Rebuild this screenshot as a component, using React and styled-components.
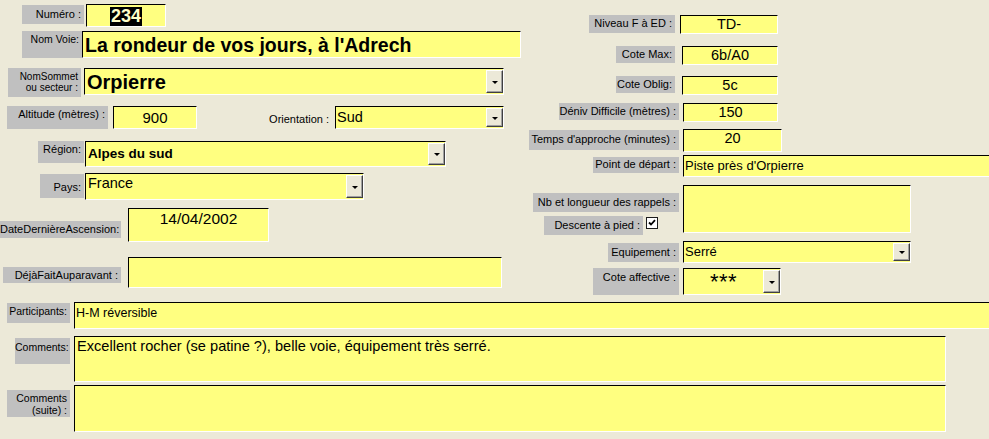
import React from 'react'
import styled, { createGlobalStyle } from 'styled-components'

const GlobalStyle = createGlobalStyle`
  html, body {
    margin: 0;
    padding: 0;
    background: #ece9d8;
    overflow: hidden;
  }
  body {
    font-family: "Liberation Sans", Arial, sans-serif;
    color: #000;
  }
`

const Form = styled.div`
  width: 989px;
  height: 439px;
  overflow: hidden;
  background: #ece9d8;
`

const Top = styled.div`
  display: flex;
  height: 302px;
`

const Column = styled.div`
  display: flex;
  flex-direction: column;
  width: ${p => p.$w}px;
  padding-top: ${p => p.$pt || 0}px;
  flex-shrink: 0;
`

const Row = styled.div`
  display: flex;
  align-items: flex-start;
  height: ${p => p.$h}px;
  padding-left: ${p => p.$x}px;
  flex-shrink: 0;
`

const Label = styled.div`
  box-sizing: border-box;
  width: ${p => p.$w}px;
  height: ${p => p.$h}px;
  margin-top: ${p => p.$dy || 0}px;
  margin-left: ${p => p.$gap || 0}px;
  background: ${p => (p.$plain ? 'transparent' : '#c0c0c0')};
  font-size: ${p => p.$fs || 11}px;
  line-height: ${p => p.$lh || 13}px;
  text-align: right;
  padding: ${p => p.$pt ?? 2}px 3px 0 0;
  white-space: pre;
  flex-shrink: 0;
`

const Field = styled.div`
  box-sizing: border-box;
  display: flex;
  width: ${p => p.$w}px;
  height: ${p => p.$h}px;
  margin-left: ${p => p.$gap || 0}px;
  margin-top: ${p => p.$dy || 0}px;
  background: #ffff80;
  border-top: 1px solid #000;
  border-left: 1px solid #000;
  border-right: 1px solid #fff;
  border-bottom: 1px solid #fff;
  overflow: hidden;
  flex-shrink: 0;
`

const Value = styled.div`
  flex: 1;
  min-width: 0;
  padding: ${p => p.$pt ?? 1}px 2px 0 ${p => p.$pl ?? 2}px;
  font-size: ${p => p.$fs || 14}px;
  line-height: ${p => p.$lh || 17}px;
  font-weight: ${p => (p.$bold ? 700 : 400)};
  letter-spacing: ${p => p.$ls || 0}px;
  text-align: ${p => (p.$center ? 'center' : 'left')};
  white-space: nowrap;
  overflow: hidden;
`

const Selected = styled.span`
  display: inline-block;
  background: #000;
  color: #ffffc8;
  padding: 0 1px;
`

const DropButton = styled.div`
  box-sizing: border-box;
  width: 17px;
  margin: 1px 0 1px 0;
  background: #ece9d8;
  border-top: 1px solid #fff;
  border-left: 1px solid #fff;
  border-right: 1px solid #404040;
  border-bottom: 1px solid #404040;
  box-shadow: inset -1px -1px 0 #a0a0a0;
  display: flex;
  align-items: center;
  justify-content: center;
  flex-shrink: 0;

  &::after {
    content: '';
    width: 0;
    height: 0;
    border-left: 3px solid transparent;
    border-right: 3px solid transparent;
    border-top: 3px solid #000;
    margin-top: 1px;
  }
`

const Stack = styled.div`
  display: flex;
  flex-direction: column;
  align-items: flex-end;
  width: ${p => p.$w}px;
  flex-shrink: 0;
`

const CheckLine = styled.div`
  display: flex;
  align-items: flex-start;
  margin-top: 4px;
  margin-right: 21px;
`

const CheckBox = styled.div`
  box-sizing: border-box;
  width: 12px;
  height: 12px;
  margin: 1px 0 0 3px;
  background: #fff;
  border: 1px solid #1c1c1c;
  display: flex;
  align-items: center;
  justify-content: center;
`

const Combo = ({ w, h, gap, dy, children, ...v }) => (
  <Field $w={w} $h={h} $gap={gap} $dy={dy}>
    <Value {...v}>{children}</Value>
    <DropButton />
  </Field>
)

const Text = ({ w, h, gap, dy, children, ...v }) => (
  <Field $w={w} $h={h} $gap={gap} $dy={dy}>
    <Value {...v}>{children}</Value>
  </Field>
)

export default function App() {
  return (
    <Form>
      <GlobalStyle />
      <Top>
        <Column $w={522} $pt={4}>
          <Row $h={27} $x={22}>
            <Label $w={62} $h={19} $dy={1} $pt={3}>Numéro :</Label>
            <Text w={80} h={23} gap={2} $center $bold $fs={18} $lh={19} $pt={2}>
              <Selected>234</Selected>
            </Text>
          </Row>
          <Row $h={37} $x={22}>
            <Label $w={60} $h={27} $fs={10.5}>Nom Voie:</Label>
            <Text w={439} h={27} $bold $fs={19.5} $lh={24} $pt={1}>
              La rondeur de vos jours, à l'Adrech
            </Text>
          </Row>
          <Row $h={38} $x={8}>
            <Label $w={73} $h={29} $fs={10} $lh={11} $pt={3}>{'NomSommet\nou secteur :'}</Label>
            <Combo w={420} h={27} gap={3} $bold $fs={20} $lh={24} $pt={1}>Orpierre</Combo>
          </Row>
          <Row $h={35} $x={7}>
            <Label $w={101} $h={23}>Altitude (mètres) :</Label>
            <Text w={84} h={23} gap={5} $center $fs={15} $lh={19} $pt={1}>900</Text>
            <Label $plain $w={72} $h={17} $dy={5} $gap={63}>Orientation :</Label>
            <Combo w={169} h={23} gap={3} $fs={14.5} $lh={18} $pt={1} $pl={1}>Sud</Combo>
          </Row>
          <Row $h={32} $x={38}>
            <Label $w={46} $h={22}>Région:</Label>
            <Combo w={361} h={26} gap={1} $bold $fs={13.5} $lh={17} $pt={3}>Alpes du sud</Combo>
          </Row>
          <Row $h={35} $x={40}>
            <Label $w={44} $h={24} $dy={1} $pt={7}>Pays:</Label>
            <Combo w={279} h={27} gap={1} $fs={14.5} $lh={17} $pt={1}>France</Combo>
          </Row>
          <Row $h={49} $x={0}>
            <Label $w={121} $h={17} $dy={13} $pt={2}>DateDernièreAscension:</Label>
            <Text w={141} h={34} gap={7} $center $fs={15.5} $lh={18} $pt={1}>14/04/2002</Text>
          </Row>
          <Row $h={45} $x={3}>
            <Label $w={118} $h={16} $dy={10} $pt={2}>DéjàFaitAuparavant :</Label>
            <Text w={374} h={31} gap={7} />
          </Row>
        </Column>

        <Column $w={467} $pt={15}>
          <Row $h={31} $x={67}>
            <Label $w={86} $h={18}>Niveau F à ED :</Label>
            <Text w={98} h={19} gap={5} $center $fs={14.5} $lh={17} $pt={0}>TD-</Text>
          </Row>
          <Row $h={30} $x={94}>
            <Label $w={59} $h={17}>Cote Max:</Label>
            <Text w={96} h={19} gap={7} $center $fs={14.5} $lh={17} $pt={0}>6b/A0</Text>
          </Row>
          <Row $h={27} $x={94}>
            <Label $w={59} $h={17}>Cote Oblig:</Label>
            <Text w={96} h={19} gap={7} $center $fs={14.5} $lh={17} $pt={0}>5c</Text>
          </Row>
          <Row $h={26} $x={37}>
            <Label $w={120} $h={17}>Déniv Difficile (mètres) :</Label>
            <Text w={95} h={19} gap={4} $center $fs={14.5} $lh={17} $pt={0}>150</Text>
          </Row>
          <Row $h={26} $x={7}>
            <Label $w={150} $h={20} $dy={1} $pt={3}>Temps d'approche (minutes) :</Label>
            <Text w={99} h={23} gap={4} $center $fs={14.5} $lh={17} $pt={0}>20</Text>
          </Row>
          <Row $h={30} $x={71}>
            <Label $w={86} $h={16} $dy={2} $pt={1}>Point de départ :</Label>
            <Text w={330} h={22} gap={4} $fs={13} $lh={16} $pt={2} $pl={1}>Piste près d'Orpierre</Text>
          </Row>
          <Row $h={56} $x={11}>
            <Stack $w={146}>
              <Label $w={146} $h={19} $dy={8} $pt={3}>Nb et longueur des rappels :</Label>
              <CheckLine>
                <Label $w={99} $h={19} $pt={3}>Descente à pied :</Label>
                <CheckBox>
                  <svg width="8" height="8" viewBox="0 0 8 8">
                    <path d="M1 3.5 L3 5.5 L7 1.2" stroke="#000" strokeWidth="1.8" fill="none" />
                  </svg>
                </CheckBox>
              </CheckLine>
            </Stack>
            <Text w={228} h={48} gap={4} />
          </Row>
          <Row $h={27} $x={86}>
            <Label $w={71} $h={19} $dy={2} $pt={3}>Equipement :</Label>
            <Combo w={228} h={22} gap={4} $fs={13} $lh={16} $pt={2} $pl={1}>Serré</Combo>
          </Row>
          <Row $h={27} $x={71}>
            <Label $w={86} $h={27} $pt={3}>Cote affective :</Label>
            <Combo w={98} h={27} gap={4} $center $fs={22} $lh={20} $ls={0.5} $pt={3}>***</Combo>
          </Row>
        </Column>
      </Top>

      <Column $w={989}>
        <Row $h={34} $x={7}>
          <Label $w={63} $h={20} $dy={1} $fs={10.5}>Participants:</Label>
          <Text w={930} h={27} gap={4} $fs={12.5} $lh={15} $pt={3} $pl={1}>H-M réversible</Text>
        </Row>
        <Row $h={49} $x={15}>
          <Label $w={55} $h={26} $dy={2} $fs={10.5} $pt={3}>Comments:</Label>
          <Text w={872} h={46} gap={4} $fs={14.6} $lh={17} $pt={1} $pl={2}>
            Excellent rocher (se patine ?), belle voie, équipement très serré.
          </Text>
        </Row>
        <Row $h={54} $x={7}>
          <Label $w={63} $h={27} $dy={5} $fs={10.5} $lh={12} $pt={2}>{'Comments\n(suite) :'}</Label>
          <Text w={872} h={47} gap={4} />
        </Row>
      </Column>
    </Form>
  )
}
